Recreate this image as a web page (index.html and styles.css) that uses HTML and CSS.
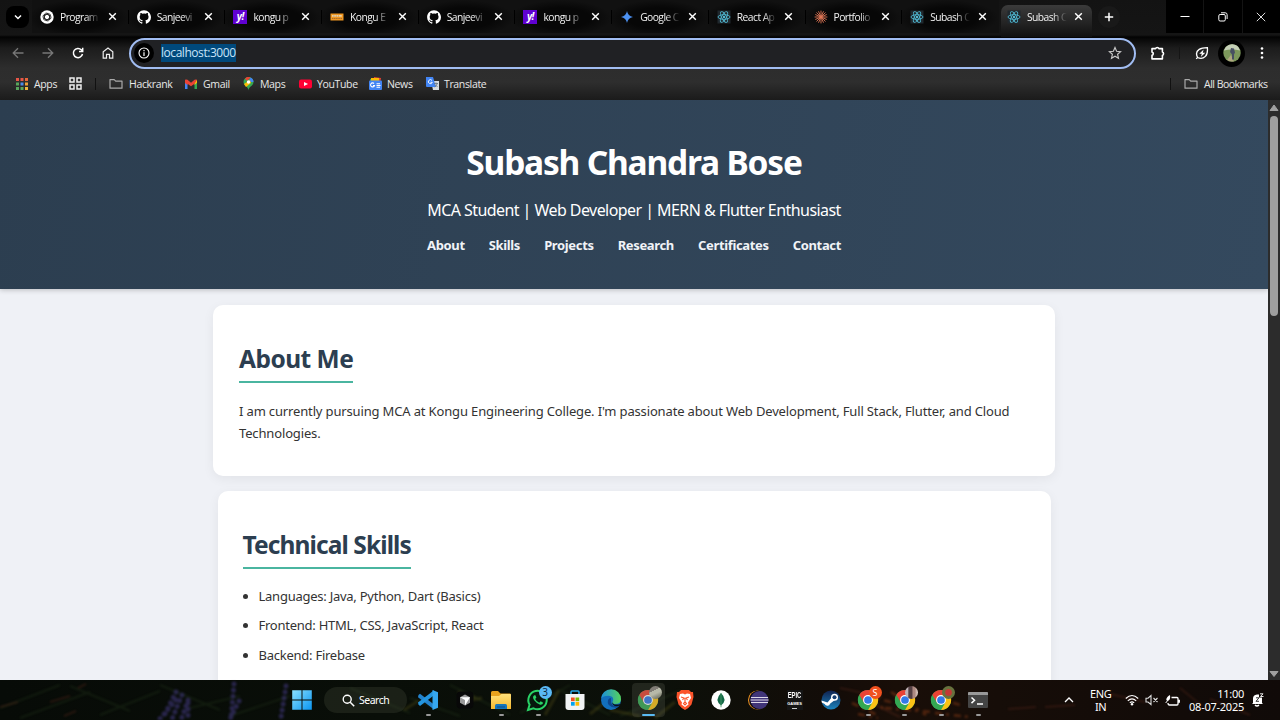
FILE: index.html
```html
<!DOCTYPE html>
<html lang="en">
<head>
<meta charset="utf-8">
<title>Subash Chandra Bose</title>
<link rel="stylesheet" href="styles.css">
</head>
<body>
<svg class="defs" width="0" height="0">
  <defs>
    <linearGradient id="win" x1="0" y1="0" x2="1" y2="1"><stop offset="0" stop-color="#8be0ff"/><stop offset="1" stop-color="#0a95f0"/></linearGradient>
    <linearGradient id="edgeA" x1="0" y1="0" x2="1" y2="0"><stop offset="0" stop-color="#1b8fdc"/><stop offset="1" stop-color="#55d35b"/></linearGradient>
    <linearGradient id="folderG" x1="0" y1="0" x2="0" y2="1"><stop offset="0" stop-color="#ffe07a"/><stop offset="1" stop-color="#f6b92f"/></linearGradient>
    <linearGradient id="steamG" x1="0" y1="0" x2="0" y2="1"><stop offset="0" stop-color="#102250"/><stop offset="1" stop-color="#1b83bd"/></linearGradient>
  </defs>
  <symbol id="close" viewBox="0 0 10 10"><path d="M2 2l6 6M8 2L2 8" stroke="#fff" stroke-width="1.300" fill="none"/></symbol>
  <symbol id="github" viewBox="0 0 24 24"><path fill="#fff" d="M12 .5C5.4.5.2 5.800.2 12.300c0 5.200 3.400 9.600 8.100 11.200.6.1.8-.3.8-.6v-2.200c-3.300.7-4-1.400-4-1.400-.5-1.400-1.300-1.700-1.300-1.700-1.100-.7.1-.7.1-.7 1.200.1 1.800 1.200 1.800 1.200 1.100 1.800 2.800 1.300 3.500 1 .1-.8.4-1.300.8-1.600-2.700-.3-5.400-1.300-5.400-5.900 0-1.300.5-2.400 1.200-3.200-.1-.3-.5-1.500.1-3.200 0 0 1-.3 3.300 1.200a11 11 0 0 1 6 0c2.300-1.500 3.300-1.200 3.300-1.200.7 1.700.2 2.900.1 3.200.8.8 1.200 1.900 1.200 3.200 0 4.600-2.800 5.600-5.500 5.900.4.400.8 1.100.8 2.200v3.200c0 .3.200.7.8.6 4.700-1.600 8.100-6 8.100-11.200C23.800 5.800 18.600.5 12 .5z"/></symbol>
  <symbol id="gpt" viewBox="0 0 24 24"><circle cx="12" cy="12" r="11.500" fill="#fff"/><g fill="none" stroke="#222" stroke-width="1.300"><path id="petal" d="M7.500 14.500V8.700a3.600 3.600 0 0 1 6.300-2.300M7.500 9.500l4.500-2.700 5 2.900"/><use href="#petal" transform="rotate(60 12 12)"/><use href="#petal" transform="rotate(120 12 12)"/><use href="#petal" transform="rotate(180 12 12)"/><use href="#petal" transform="rotate(240 12 12)"/><use href="#petal" transform="rotate(300 12 12)"/></g></symbol>
  <symbol id="kongu" viewBox="0 0 14 14"><path fill="#ef9722" d="M.5 3.500h13v7H.5z"/><path fill="#fff1cb" d="M2 5h9.500v1.800H2z"/><path stroke="#a96a28" stroke-width="1" stroke-dasharray="1.300 .5" d="M2.500 6h8M2 8.500h10"/></symbol>
  <symbol id="gemini" viewBox="0 0 14 14"><path fill="#4c91f2" d="M7 1Q7.900 6.100 13 7 7.900 7.900 7 13 6.100 7.900 1 7 6.100 6.100 7 1z"/></symbol>
  <symbol id="react" viewBox="0 0 14 14"><path fill="#20282e" d="M.5.5h13v13H.5z"/><g fill="none" stroke="#4fb9d2" stroke-width=".9"><ellipse cx="7" cy="7" rx="6" ry="2.300"/><ellipse cx="7" cy="7" rx="6" ry="2.300" transform="rotate(60 7 7)"/><ellipse cx="7" cy="7" rx="6" ry="2.300" transform="rotate(120 7 7)"/></g><circle cx="7" cy="7" r="1.100" fill="#61dafb"/></symbol>
  <symbol id="claude" viewBox="0 0 14 14"><path d="M7 .6v12.800M.6 7h12.800M2.500 2.500l9 9M11.500 2.500l-9 9M4.500 1.300l5 11.400M9.500 1.300l-5 11.400M1.300 4.500l11.400 5M12.700 4.500l-11.400 5" stroke="#df7656" stroke-width=".9"/></symbol>
  <symbol id="folder" viewBox="0 0 14 12"><path d="M1 10.200V1.600h4.200l1.500 1.600H13v7z" fill="none" stroke="#aaa" stroke-width="1.200" stroke-linejoin="round"/></symbol>
  <symbol id="chrome" viewBox="0 0 24 24"><circle cx="12" cy="12" r="11" fill="#34a853"/><path d="M12 12L2.470 6.500A11 11 0 0 1 21.530 6.500H12z" fill="#ea4335"/><path d="M12 12V6.500h9.530A11 11 0 0 1 12 23l4.800-8.300z" fill="#fbc116"/><path d="M2.470 6.500l4.800 8.300L12 12V6.500z" fill="#ea4335"/><path d="M2.470 6.500l4.800 8.300q1.500 3 5 2.700L12 23A11 11 0 0 1 2.470 6.500z" fill="#34a853"/><circle cx="12" cy="12" r="5.400" fill="#fff"/><circle cx="12" cy="12" r="4.200" fill="#3479e8"/></symbol>
</svg>

<header class="browser">
  <div class="tabstrip">
    <div class="tab-search"><svg width="10" height="10" viewBox="0 0 10 10"><path d="M2 3.500l3 3 3-3" fill="none" stroke="#fff" stroke-width="1.500"/></svg></div>
    <div class="tabs">
      <div class="tab"><svg class="fav"><use href="#gpt"/></svg><span class="tab-title">Program</span><svg class="x"><use href="#close"/></svg></div>
      <div class="tab"><svg class="fav"><use href="#github"/></svg><span class="tab-title">Sanjeevi</span><svg class="x"><use href="#close"/></svg></div>
      <div class="tab"><span class="fav yahoo">y!</span><span class="tab-title">kongu p</span><svg class="x"><use href="#close"/></svg></div>
      <div class="tab"><svg class="fav"><use href="#kongu"/></svg><span class="tab-title">Kongu E</span><svg class="x"><use href="#close"/></svg></div>
      <div class="tab"><svg class="fav"><use href="#github"/></svg><span class="tab-title">Sanjeevi</span><svg class="x"><use href="#close"/></svg></div>
      <div class="tab"><span class="fav yahoo">y!</span><span class="tab-title">kongu p</span><svg class="x"><use href="#close"/></svg></div>
      <div class="tab"><svg class="fav"><use href="#gemini"/></svg><span class="tab-title">Google C</span><svg class="x"><use href="#close"/></svg></div>
      <div class="tab"><svg class="fav"><use href="#react"/></svg><span class="tab-title">React Ap</span><svg class="x"><use href="#close"/></svg></div>
      <div class="tab"><svg class="fav"><use href="#claude"/></svg><span class="tab-title">Portfolio</span><svg class="x"><use href="#close"/></svg></div>
      <div class="tab no-sep"><svg class="fav"><use href="#react"/></svg><span class="tab-title">Subash C</span><svg class="x"><use href="#close"/></svg></div>
      <div class="tab active"><svg class="fav"><use href="#react"/></svg><span class="tab-title">Subash C</span><svg class="x"><use href="#close"/></svg></div>
    </div>
    <div class="new-tab"><svg width="10" height="10" viewBox="0 0 10 10"><path d="M5 .8v8.400M.8 5h8.400" stroke="#fff" stroke-width="1.500"/></svg></div>
    <div class="window-controls">
      <div><svg width="10" height="10" viewBox="0 0 10 10"><path d="M.5 4.500h9" stroke="#fff"/></svg></div>
      <div><svg width="10" height="10" viewBox="0 0 10 10"><rect x=".8" y="2.500" width="6.500" height="6.500" rx="1.300" fill="none" stroke="#fff"/><path d="M3 .8h4.200q1.900 0 1.900 1.900V7" fill="none" stroke="#fff"/></svg></div>
      <div><svg width="10" height="10" viewBox="0 0 10 10"><path d="M.8.8l8.400 8.400M9.200.8L.8 9.200" stroke="#ddd"/></svg></div>
    </div>
  </div>

  <div class="toolbar">
    <div class="tool"><svg width="12" height="12" viewBox="0 0 12 12"><path d="M11.500 6H1.200M6 1.200L1.200 6 6 10.800" fill="none" stroke="#777" stroke-width="1.300"/></svg></div>
    <div class="tool"><svg width="12" height="12" viewBox="0 0 12 12"><path d="M.5 6h10.300M6 1.200L10.800 6 6 10.800" fill="none" stroke="#777" stroke-width="1.300"/></svg></div>
    <div class="tool"><svg width="12" height="12" viewBox="0 0 12 12"><path d="M10.500 7A4.600 4.600 0 1 1 9.300 2.800L10.500 4M10.700 .8v3.700H7" fill="none" stroke="#fff" stroke-width="1.500"/></svg></div>
    <div class="tool"><svg width="12" height="12" viewBox="0 0 12 12"><path d="M1.200 11.200V4.800L6 1l4.800 3.800v6.400H7.500V7.300h-3v3.900z" fill="none" stroke="#eee" stroke-width="1.200"/></svg></div>
    <div class="address">
      <span class="site-info"><svg width="12" height="12" viewBox="0 0 12 12"><circle cx="6" cy="6" r="5" fill="none" stroke="#fff" stroke-width="1.100"/><path d="M6 5.300V9M6 3v1.300" stroke="#fff" stroke-width="1.200"/></svg></span>
      <span class="url">localhost:3000</span>
      <svg class="star" width="14" height="14" viewBox="0 0 14 14"><path d="M7 1.500l1.600 3.700 4 .4-3 2.700.9 4L7 10.200l-3.500 2.100.9-4-3-2.700 4-.4z" fill="none" stroke="#c8c8c8" stroke-width="1.150"/></svg>
    </div>
    <div class="tool puzzle"><svg width="16" height="16" viewBox="0 0 16 16"><path d="M2 3.600h3.600a1.700 1.500 0 0 1 3.300 0h3.500v3.500a1.500 1.700 0 0 1 0 3.300v3.500H2v-3.500a1.700 1.700 0 0 0 0-3.300z" fill="none" stroke="#fff" stroke-width="1.600" stroke-linejoin="round"/></svg></div>
    <i class="tool-divider"></i>
    <div class="tool leaf"><svg width="14" height="14" viewBox="0 0 14 14"><path d="M2.600 11.500Q-.2 6.300 4.200 3.400 6.800 1.800 12.400 1.700q.5 6.200-2 8.700-3.300 3.300-7.800 1.100l-1.400 1.400" fill="none" stroke="#fff" stroke-width="1.300"/><path d="M8.600 3.600L4.300 7.800h2.500l-1 3.200 4.500-4.300H7.800z" fill="#fff"/></svg></div>
    <div class="avatar"><svg width="18" height="18" viewBox="0 0 18 18"><circle cx="9" cy="9" r="8.700" fill="#7c985b"/><path d="M1 6.500Q3 .5 9 .3t8 6.200q-8-2-16 0z" fill="#c4cfb6"/><path d="M4 16l4-5 3 6.500Q7 18 4 16z" fill="#afa780"/><path d="M8 4l3 .5 1 4-1 2v5H9v-5L7 8z" fill="#485062"/></svg></div>
    <svg class="dots" width="6" height="14" viewBox="0 0 6 14"><g fill="#fff"><circle cx="3" cy="2.500" r="1.300"/><circle cx="3" cy="7" r="1.300"/><circle cx="3" cy="11.500" r="1.300"/></g></svg>
  </div>

  <nav class="bookmarks">
    <div class="bm bm-apps"><svg width="12" height="12" viewBox="0 0 12 12"><g stroke-width="3"><path stroke="#e85647" d="M0 1.500h3M4.500 1.500h3"/><path stroke="#e8663b" d="M9 1.500h3"/><path stroke="#58a55c" d="M0 6h3"/><path stroke="#4c8bea" d="M4.500 6h3"/><path stroke="#ef9f37" d="M9 6h3"/><path stroke="#58a55c" d="M0 10.500h3M4.500 10.500h3"/><path stroke="#efb73e" d="M9 10.500h3"/></g></svg>Apps</div>
    <div class="bm bm-grid"><svg width="13" height="13" viewBox="0 0 13 13"><g fill="none" stroke="#eee" stroke-width="1.500"><path d="M1 1h4v4H1zM8 1h4v4H8zM1 8h4v4H1zM8 8h4v4H8z"/></g></svg></div>
    <i class="bm-divider"></i>
    <div class="bm bm-hack"><svg width="14" height="12"><use href="#folder"/></svg>Hackrank</div>
    <div class="bm bm-gmail"><svg width="12" height="10" viewBox="0 0 12 10"><path fill="#4285f4" d="M0 1h2.500v9H0z"/><path fill="#34a853" d="M9.500 1H12v9H9.500z"/><path fill="#fbbc04" d="M9.500 3.500L12 .8v3L9.500 6z"/><path fill="#ea4335" d="M0 .8Q1 0 2.500.8L6 3.700 9.500.8Q11 0 12 .8l-2.500 4L6 7.300 2.500 4.800V6L0 4z"/></svg>Gmail</div>
    <div class="bm bm-maps"><svg width="11" height="14" viewBox="0 0 11 14"><path fill="#34a853" d="M5.500 13.500C5.500 9.500.5 9 .5 5a5 5 0 0 1 10 0c0 4-5 4.500-5 8.500z"/><path fill="#4285f4" d="M5.500 5l2-4.600A5 5 0 0 1 10.500 5z"/><path fill="#ea4335" d="M2 1.500A5 5 0 0 1 7.500.4L4 4z"/><path fill="#fbbc04" d="M1 7L7 3l1 3-5 4z"/><circle cx="5.500" cy="5" r="1.700" fill="#fff"/></svg>Maps</div>
    <div class="bm bm-yt"><svg width="13" height="10" viewBox="0 0 13 10"><rect y=".5" width="13" height="9" rx="2" fill="#ff0033"/><path d="M5 3l4 2-4 2z" fill="#fff"/></svg>YouTube</div>
    <div class="bm bm-news"><svg width="13" height="13" viewBox="0 0 13 13"><path fill="#34a853" d="M1 2l8-1 1 5H1z"/><path fill="#ea4335" d="M5 0l7 1-1 5H5z"/><path fill="#fbbc04" d="M2 1h8v4H2z"/><rect y="3.500" width="13" height="9.500" rx="1" fill="#4285f4"/><path d="M5 6.500a2 2 0 1 0 .5 2H4M7.500 6.800h3.500M7.500 8.500h4M7.500 10.200H11" fill="none" stroke="#fff" stroke-width="1.100"/></svg>News</div>
    <div class="bm bm-trans"><svg width="13" height="13" viewBox="0 0 13 13"><path d="M5 4h8v9H7z" fill="#d7dce0"/><path d="M0 0h7l3 10H1q-1 0-1-1z" fill="#4285f4"/><path d="M6 3.500a2 2 0 1 0 .3 1.800H4.500" fill="none" stroke="#fff" stroke-width=".9"/><path d="M8 6.500h4M10 5.500v1M11.300 6.500Q10.500 9 8.500 10M9 7.500l2.500 2.500" fill="none" stroke="#63717e" stroke-width=".8"/></svg>Translate</div>
    <i class="bm-divider end"></i>
    <div class="bm bm-all"><svg width="14" height="12"><use href="#folder"/></svg>All Bookmarks</div>
  </nav>
</header>

<div class="viewport">
  <div class="page">
    <div class="hero">
      <h1>Subash Chandra Bose</h1>
      <p class="tagline">MCA Student | Web Developer | MERN &amp; Flutter Enthusiast</p>
      <nav class="hero-nav"><a>About</a><a>Skills</a><a>Projects</a><a>Research</a><a>Certificates</a><a>Contact</a></nav>
    </div>
    <section class="card about">
      <h2>About Me</h2>
      <p>I am currently pursuing MCA at Kongu Engineering College. I'm passionate about Web Development, Full Stack, Flutter, and Cloud<br>Technologies.</p>
    </section>
    <section class="card skills">
      <h2>Technical Skills</h2>
      <ul>
        <li>Languages: Java, Python, Dart (Basics)</li>
        <li>Frontend: HTML, CSS, JavaScript, React</li>
        <li>Backend: Firebase</li>
      </ul>
    </section>
  </div>
  <div class="scrollbar">
    <svg width="12" height="14" viewBox="0 0 12 14"><path d="M6 5l4 5.500H2z" fill="#a0a0a0" stroke="#a0a0a0" stroke-linejoin="round"/></svg>
    <div class="thumb"></div>
    <svg class="down" width="12" height="12" viewBox="0 0 12 12"><path d="M6 8.500L2 3.500h8z" fill="#a0a0a0" stroke="#a0a0a0" stroke-linejoin="round"/></svg>
  </div>
</div>

<footer class="taskbar">
  <svg class="wallpaper" width="1280" height="40" viewBox="0 0 1280 40">
    <g fill="none" stroke="#24391d" stroke-width="2" opacity=".35"><path d="M0 28L60 5M20 38l70-26M70 6l60 25M100 35l60-24M160 5l60 25M190 28l50-12M230 36l60-20M350 8l60 25M410 18l50 18M450 5l60 30M520 33l50-28M560 10l50 25M620 36l60-25"/></g>
    <g fill="none" stroke="#5c5719" stroke-width="3" opacity=".35"><path d="M458 12l18 6M460 22l22-4M545 35l14-25M590 34l18-14M610 30l30 6M655 38l20-16M404 30l14-9"/></g>
    <g fill="none" stroke="#6b3020" stroke-width="1.500" opacity=".4"><path d="M0 27l18-5M50 22l20-6M64 36l12-5M78 8l8-4M1008 29l28-2M1045 27l30-2M1110 14l35 8M1180 8l22 18M1210 19l40 16M840 8l42 9M875 25l25 12"/></g>
    <g fill="none" stroke="#3a3370" stroke-width="5" stroke-linecap="round" stroke-dasharray=".1 6" opacity=".65"><path d="M176 12l-13 26M182 15l-10 24M188 20l-7 20M188 23v17M176 20l-17 20M234 4l-3 36M239 21l-9 18M286 6l-5 32"/></g>
    <g fill="none" stroke="#b64b19" stroke-width="2.500" stroke-dasharray="7 4 3 5" opacity=".38"><path d="M852 23l25 12M866 15l28 8M885 28l48 4M891 12l35 23M935 17l25 8M935 33l34 4M858 34l20 4M872 20l12 9"/></g>
  </svg>
  <div class="start"><svg width="20" height="20" viewBox="0 0 20 20"><path d="M.2.2h9.300v9.300H.2zM10.500.2h9.300v9.300h-9.300zM.2 10.500h9.300v9.300H.2zM10.500 10.500h9.300v9.300h-9.300z" fill="url(#win)"/></svg></div>
  <div class="search"><svg width="13" height="13" viewBox="0 0 13 13"><circle cx="5.200" cy="5.200" r="4" fill="none" stroke="#fff" stroke-width="1.400"/><path d="M8.200 8.200l4 4" stroke="#fff" stroke-width="1.500"/></svg>Search</div>
  <div class="apps">
    <div class="app run"><svg width="22" height="22" viewBox="0 0 22 22"><path d="M1.500 6L3 4.800 17 15.500v5L1 8.200z" fill="#2383cd"/><path d="M1.500 15.500L3 17 17 6.300v-5L1 13.600z" fill="#2495df"/><path d="M15.500 1L21 3.300v15.400L15.500 21z" fill="#36a7ef"/></svg></div>
    <div class="app"><svg width="20" height="20" viewBox="0 0 20 20"><rect x="1.500" y="1.500" width="17" height="17" rx="4" fill="#080808"/><path d="M10 4.500l5 2.700v5.600L10 15.500l-5-2.700V7.200z" fill="#999"/><path d="M5 7.200h10l-5 8.300V10z" fill="#fff"/></svg></div>
    <div class="app run"><svg width="22" height="22" viewBox="0 0 22 22"><path d="M1 3.500Q1 2 2.500 2H8l2.500 2.500H20q1 0 1 1.500v4H1z" fill="#e7a21f"/><path d="M1 7h8l2.500-2H20q1 0 1 1v14H1z" fill="url(#folderG)"/><path d="M5 20v-3.500Q5 15 6.500 15h9q1.500 0 1.500 1.500V20z" fill="#1475bd"/><path d="M7 18h8" stroke="#0f538d" stroke-width="1.200"/></svg></div>
    <div class="app run"><svg width="24" height="24" viewBox="0 0 24 24"><path d="M2 22l1.600-5.300A9.200 9.200 0 1 1 7.500 20.300z" fill="#06180d" stroke="#29d366" stroke-width="2"/><path d="M8 7.500q-2 1.500.2 4.800Q11 16 14.200 16.700q2.500.2 3-2l-2.500-1.500-1.500 1.500q-2.800-1-4-3.700l1.200-1.400L9.200 7z" fill="#29d366"/></svg><span class="badge">3</span></div>
    <div class="app"><svg width="20" height="22" viewBox="0 0 20 22"><path d="M6 6V3q0-1 1-1h6q1 0 1 1v3" fill="none" stroke="#29a9e8" stroke-width="1.500"/><path d="M.5 5h19v13q0 3-3 3h-13q-3 0-3-3z" fill="#f1f3f4"/><path d="M6 8.500h3.700v3.700H6z" fill="#f25022"/><path d="M10.500 8.500h3.700v3.700h-3.700z" fill="#7fba00"/><path d="M6 13h3.700v3.700H6z" fill="#00a4ef"/><path d="M10.500 13h3.700v3.700h-3.700z" fill="#ffb900"/></svg></div>
    <div class="app"><svg width="22" height="22" viewBox="0 0 22 22"><circle cx="11" cy="11" r="10" fill="#126fbd"/><path d="M1 10A10 10 0 0 1 21 10.500Q20.500 15 15 15q-3.500 0-2.500-2Q15 7.500 9 6.700 3 6.500 1 10z" fill="url(#edgeA)"/><path d="M8 11q-2 7 8 7.800 2-.3 3.500-2.200-7 2-8.500-3.400L11 9q-2 0-3 2z" fill="#0d478e"/><path d="M12 12.500q1 4.500 8.500 2.500l-1.200 1.800Q12.500 18.500 12 12.500z" fill="#081218"/></svg></div>
    <div class="app run current"><svg width="22" height="22"><use href="#chrome"/></svg><span class="profile p1"></span></div>
    <div class="app"><svg width="18" height="22" viewBox="0 0 18 22"><path d="M5 1h8l2 2h2l.5 5-2 7.500Q13 19 9 21q-4-2-6.500-5.500L.5 8 1 3h2z" fill="#fb542b"/><path d="M4 5l3-.5 2 1 2-1 3 .5 1 4-3 4.500.5 2L9 18l-3.500-2.500.5-2L3 9z" fill="#fff"/><path d="M5 8l3 1-1.500 2M13 8l-3 1 1.500 2M9 9v4l-1.500 1.500L9 16l1.500-1.500L9 13" fill="none" stroke="#fb542b" stroke-width="1.100"/></svg></div>
    <div class="app"><svg width="20" height="20" viewBox="0 0 20 20"><circle cx="10" cy="10" r="9.700" fill="#fff"/><path d="M10 3q-7 7 0 12.500Q17 10 10 3z" fill="#136846"/><path d="M10 3v14.300" stroke="#499a68" stroke-width=".8"/></svg></div>
    <div class="app"><svg width="22" height="22" viewBox="0 0 22 22"><circle cx="10.500" cy="11" r="9.500" fill="#f49820"/><circle cx="11.500" cy="11" r="9.500" fill="#100e19"/><circle cx="12.500" cy="11" r="9" fill="#413579"/><path d="M4 8.500h17M3.500 11h18M4 13.500h17" stroke="#ddd8e8" stroke-width="1.200"/></svg></div>
    <div class="app"><div class="epic"><b>EPIC</b><small>GAMES</small><i></i></div></div>
    <div class="app"><svg width="20" height="20" viewBox="0 0 20 20"><circle cx="10" cy="10" r="9.500" fill="url(#steamG)"/><path d="M.5 10.500l6 2 5-6 3 3-5.500 4.200q-.5 2.500-3 2Q4 15 3.700 14L.8 12.500z" fill="#fff"/><circle cx="13.500" cy="7.300" r="3.500" fill="#fff"/><circle cx="13.500" cy="7.300" r="2" fill="#173e72"/></svg></div>
    <div class="app run"><svg width="22" height="22"><use href="#chrome"/></svg><span class="profile p2">S</span></div>
    <div class="app run"><svg width="22" height="22"><use href="#chrome"/></svg><span class="profile p3"></span></div>
    <div class="app run"><svg width="22" height="22"><use href="#chrome"/></svg><span class="profile p4"></span></div>
    <div class="app run"><svg width="20" height="16" viewBox="0 0 20 16"><rect width="20" height="16" rx="1" fill="#444"/><path d="M0 1q0-1 1-1h18q1 0 1 1v2H0z" fill="#999"/><path d="M3.500 5.500L6.500 8.300l-3 2.800M9 12h6" fill="none" stroke="#fff" stroke-width="1.500"/></svg></div>
  </div>
  <div class="tray">
    <svg class="up" width="12" height="10" viewBox="0 0 12 10"><path d="M2 7l4-4 4 4" fill="none" stroke="#fff" stroke-width="1.300"/></svg>
    <div class="lang">ENG<br>IN</div>
    <svg class="wifi" width="14" height="12" viewBox="0 0 14 12"><path d="M.8 4.500q6.200-6 12.400 0M2.800 6.800q4.200-4 8.400 0M4.800 8.900q2.200-2 4.400 0" fill="none" stroke="#fff" stroke-width="1.100"/><circle cx="7" cy="10.300" r="1.200" fill="#fff"/></svg>
    <svg class="mute" width="14" height="12" viewBox="0 0 14 12"><path d="M1 4.200h2L6 1.500v9L3 8H1zM8.500 4l4 4M12.500 4l-4 4" fill="none" stroke="#ddd" stroke-width="1.100"/></svg>
    <svg class="battery" width="15" height="13" viewBox="0 0 15 13"><path d="M6.500 3.500H12q1 0 1 1v5.500q0 1-1 1H4.500q-1.500 0-1.500-2M14.300 5.800v3" fill="none" stroke="#fff" stroke-width="1.300"/><path d="M1.300 6Q1.300 3 5 1q.7 4.300-1.500 5.500-1.600.7-2.200-.5z" fill="#fff"/><path d="M3 6L.7 9" stroke="#fff"/></svg>
    <div class="clock">11:00<br>08-07-2025</div>
    <svg class="bell" width="13" height="14" viewBox="0 0 13 14"><path d="M2 10V5.500q0-3.500 4-4h2v3h3V10l1 1H1z" fill="#fff"/><path d="M4 12q2 2 4 0" stroke="#fff" stroke-width="1.400" fill="none"/><path d="M9 .8h3L9.500 3.500h3" fill="none" stroke="#fff" stroke-width=".9"/><path d="M5 4.800h3L5 8.300h3" fill="none" stroke="#222" stroke-width=".9"/></svg>
  </div>
</footer>
</body>
</html>
```
FILE: styles.css
```css
* { box-sizing: border-box; }
body { margin: 0; width: 1280px; height: 720px; overflow: hidden; display: flex; flex-direction: column; font-family: "Noto Sans", "Open Sans", sans-serif; background: #000; }
svg { display: block; flex: none; }
.defs { position: absolute; }

.browser { height: 100px; flex: none; color: #e8e8e8; font-family: "Open Sans", "Noto Sans", sans-serif; background: linear-gradient(#131313 0, #151515 35px, #030303 37px, #1c1c1c 48px, #2d2d2d 68px, #2e2e2e 82px, #1b1b1b 100px); }
.tabstrip { height: 37px; display: flex; align-items: center; padding-left: 6px; padding-bottom: 4px; }
.tab-search { width: 23px; height: 22px; border-radius: 8px; background: #000; display: flex; align-items: center; justify-content: center; }
.tabs { display: flex; height: 33px; margin-left: 3px; }
.tab { width: 96.700px; display: flex; align-items: center; padding-left: 8px; background: radial-gradient(ellipse at 47% 55%, #070707 40%, #111 70%); }
.tab::after { content: ""; width: 1px; height: 14px; margin-left: auto; background: #000; }
.tab.no-sep::after, .tab.active::after { content: none; }
.fav { width: 14px; height: 14px; flex: none; }
.yahoo { background: #6001d2; color: #fff; font-size: 10px; font-weight: bold; font-style: italic; line-height: 12px; text-align: center; letter-spacing: -.5px; }
.tab-title { width: 41px; flex: none; margin-left: 6px; white-space: nowrap; font-size: 10.300px; line-height: 16px; letter-spacing: -.55px; color: #f2f2f2; -webkit-mask-image: linear-gradient(90deg, #000 62%, transparent 97%); mask-image: linear-gradient(90deg, #000 62%, transparent 97%); }
.x { width: 11px; height: 11px; margin-left: 5.500px; }
.tab.active { width: 91px; margin: 5px 4px 0 2px; height: 32px; padding: 0 0 9px 6px; border-radius: 7px 7px 0 0; background: linear-gradient(#3b3b3b, #242424 55%, #101010); }
.new-tab { width: 22px; height: 22px; border-radius: 11px; display: flex; align-items: center; justify-content: center; background: #191919; margin-left: 2px; }
.window-controls { display: flex; gap: 1px; margin-left: auto; height: 33px; }
.window-controls div { width: 37.400px; display: flex; align-items: center; justify-content: center; background: #000; }

.toolbar { height: 32px; display: flex; align-items: center; padding-left: 3px; }
.tool { width: 30px; display: flex; justify-content: center; }
.address { width: 1007px; height: 31px; margin: 0 0 0 6px; border: 2px solid #a1bdf2; border-radius: 16px; background: #202124; display: flex; align-items: center; padding: 0 12px 0 3px; }
.site-info { width: 20px; height: 20px; border-radius: 50%; background: #000; display: flex; align-items: center; justify-content: center; }
.url { margin-left: 7px; background: #00497c; color: #c8e3f8; font-size: 12px; line-height: 18px; letter-spacing: -.45px; }
.star { margin-left: auto; }
.puzzle { margin-left: 7px; }
.tool-divider { width: 1px; height: 12px; background: #151515; margin-left: 6px; }
.leaf { width: 24px; margin-left: 10px; }
.avatar { width: 27px; height: 27px; margin-left: 4px; border-radius: 50%; background: #000; display: flex; align-items: center; justify-content: center; }
.dots { margin-left: 14px; }

.bookmarks { height: 29px; display: flex; align-items: center; padding-left: 16px; font-size: 10.500px; letter-spacing: -.35px; white-space: nowrap; }
.bm { display: flex; align-items: center; gap: 6px; flex: none; }
.bm-apps { width: 53px; }
.bm-grid { width: 26px; }
.bm-divider { width: 1px; height: 12px; background: #111; }
.bm-hack { width: 76px; margin-left: 13px; }
.bm-gmail { width: 58px; }
.bm-maps { width: 56px; }
.bm-yt { width: 70px; gap: 5px; }
.bm-news { width: 57px; gap: 5px; }
.bm-trans { gap: 5px; width: 60px; }
.bm-divider.end { margin-left: auto; }
.bm-all { width: 96px; margin-left: 13px; letter-spacing: -.5px; }

.viewport { height: 580px; flex: none; display: flex; }
.page { width: 1268px; height: 580px; overflow: hidden; background: #eff1f6; display: flex; flex-direction: column; align-items: center; }
.hero { width: 100%; height: 189px; flex: none; display: flex; flex-direction: column; align-items: center; color: #fff; background: linear-gradient(100deg, #2c3e50, #34495e); box-shadow: 0 1px 5px rgba(0,0,0,.22); white-space: nowrap; }
.hero h1 { margin: 39px 0 0; font-size: 33.500px; line-height: 46px; letter-spacing: -1.200px; }
.tagline { margin: 13px 0 0; font-size: 16px; line-height: 24px; letter-spacing: -.560px; }
.hero-nav { margin-top: 12px; width: 414px; display: flex; justify-content: space-between; font-size: 13px; font-weight: bold; line-height: 22px; letter-spacing: -.350px; color: #f0f3f7; }
.card { flex: none; background: #fff; border-radius: 10px; box-shadow: 0 3px 12px rgba(0,0,0,.06); color: #333; }
.card h2 { display: inline-block; margin: 0; color: #2c3e50; font-size: 24.500px; line-height: 39px; height: 44px; border-bottom: 2px solid #4ab5a0; white-space: nowrap; }
.about { width: 842px; height: 171px; margin-top: 16px; padding: 34px 25px 0 26px; }
.about h2 { letter-spacing: -.520px; }
.about p { margin: 17px 0 0; font-size: 13px; line-height: 22px; letter-spacing: -.150px; white-space: nowrap; }
.skills { width: 833px; height: 250px; margin-top: 15px; padding: 33.500px 25px; }
.skills h2 { letter-spacing: -.900px; }
.skills ul { margin: 16px 0 0; padding-left: 16px; font-size: 13px; letter-spacing: -.250px; }
.skills li { line-height: 22px; margin-bottom: 7.700px; }
.scrollbar { width: 12px; height: 580px; background: #2c2c2c; display: flex; flex-direction: column; align-items: center; }
.thumb { width: 8px; height: 200px; margin-top: 2px; border-radius: 4px; background: #9f9f9f; }
.down { margin-top: auto; }

.taskbar { height: 40px; flex: none; position: relative; display: flex; align-items: center; background: linear-gradient(90deg, #070b07, #090e08 30%, #0c1009 52%, #130c08 65%, #190e08 70%, #160d08 78%, #100a08); color: #fff; }
.wallpaper { position: absolute; left: 0; top: 0; filter: blur(1px); }
.start { position: relative; margin-left: 291.500px; }
.search { position: relative; width: 83px; height: 26px; margin-left: 12.500px; border-radius: 13px; background: rgba(70,76,60,.3); display: flex; align-items: center; gap: 4px; padding-left: 18px; font-size: 10.500px; letter-spacing: -.500px; }
.apps { position: relative; display: flex; margin-left: 2.700px; height: 40px; }
.app { width: 36.660px; height: 40px; display: flex; align-items: center; justify-content: center; position: relative; }
.app.run::after { content: ""; position: absolute; left: 16px; bottom: 4px; width: 5px; height: 2px; border-radius: 1px; background: #999; }
.app.current::before { content: ""; position: absolute; left: 2px; top: 3px; width: 33px; height: 34px; border-radius: 4px; background: rgba(100,105,90,.25); }
.app.current::after { left: 12px; width: 13px; background: #5abaf2; }
.badge { position: absolute; left: 19px; top: 6px; width: 13px; height: 13px; border-radius: 50%; background: #5ab9f5; color: #102a40; font-size: 10px; line-height: 13px; text-align: center; }
.profile { position: absolute; left: 19px; top: 6px; width: 13px; height: 13px; border-radius: 50%; font-size: 9px; line-height: 13px; text-align: center; }
.p1 { background: linear-gradient(155deg, #807c75 35%, #b7b9a9 36% 55%, #595c4c); }
.p2 { background: #f0511f; }
.p3 { background: linear-gradient(90deg, #c1b4b7 20%, #543f43 30% 55%, #ad8981 60% 75%, #eadbd2); }
.p4 { background: radial-gradient(#c33835 30%, #67723e 45%); }
.epic { width: 16px; height: 20px; background: #151515; display: flex; flex-direction: column; align-items: center; font-family: "Liberation Sans", sans-serif; }
.epic b { font-size: 9px; line-height: 11px; transform: scaleX(.65); }
.epic small { font-size: 4px; line-height: 5px; font-weight: bold; }
.epic i { width: 5px; height: 1px; margin-top: 2px; background: #ccc; }
.tray { position: relative; flex: 1; display: flex; align-items: center; font-size: 11px; line-height: 13px; letter-spacing: -.450px; }
.up { margin-left: 66.500px; }
.lang { width: 26px; margin-left: 13px; text-align: center; }
.wifi { margin-left: 11px; }
.mute { margin-left: 6px; }
.battery { margin-left: 6px; }
.clock { margin-left: auto; text-align: right; letter-spacing: -.250px; }
.bell { margin: 0 16px 0 7px; }
```
